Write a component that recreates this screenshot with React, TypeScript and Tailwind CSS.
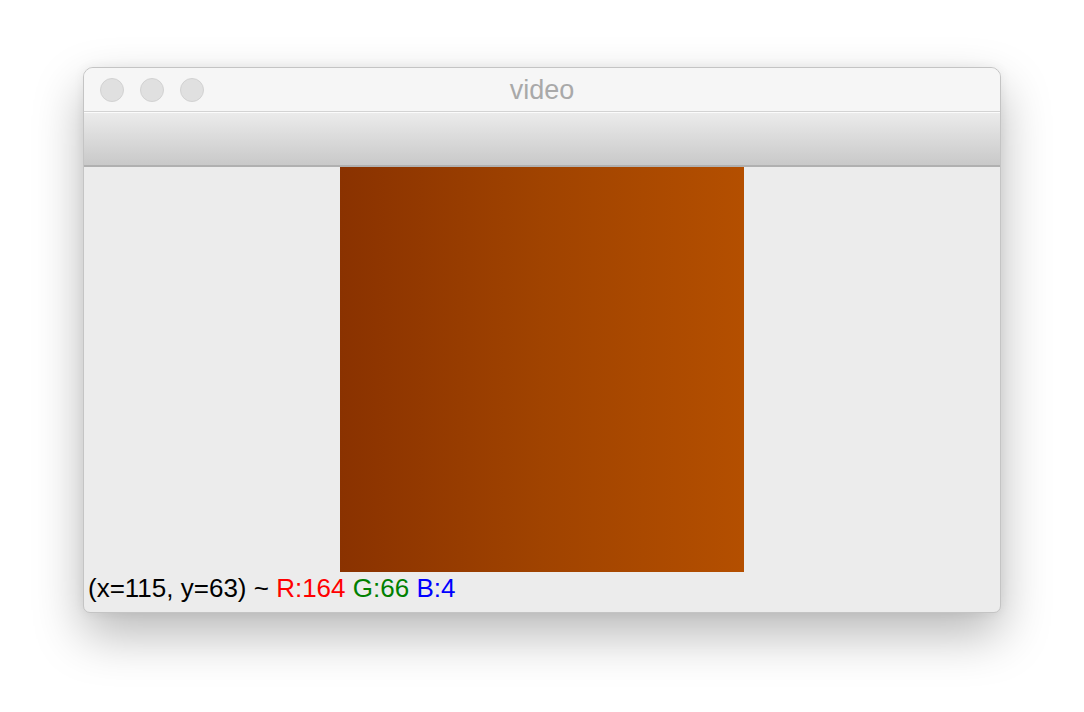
import React from "react";

export default function App() {
  return (
    <div className="w-[1084px] h-[712px] bg-white overflow-hidden pt-[67px] pl-[83px]" style={{ fontFamily: '"Liberation Sans", Arial, sans-serif' }}>
      <div className="w-[918px] h-[546px] flex flex-col rounded-t-[10px] rounded-b-[7px] border border-[#c4c4c4] bg-[#ececec] overflow-hidden shadow-[0_22px_50px_rgba(0,0,0,0.28),0_0_12px_rgba(0,0,0,0.06)]">
        <div className="relative h-[44px] shrink-0 bg-[#f6f6f6] border-b border-[#d3d3d3] flex items-center pl-[16px] gap-[16px]">
          <div className="w-[24px] h-[24px] rounded-full bg-[#e0e0e0] border border-[#d2d2d2]" />
          <div className="w-[24px] h-[24px] rounded-full bg-[#e0e0e0] border border-[#d2d2d2]" />
          <div className="w-[24px] h-[24px] rounded-full bg-[#e0e0e0] border border-[#d2d2d2]" />
          <div className="absolute inset-0 flex items-center justify-center pt-[2px] text-[27px] text-[#a9a9a9] pointer-events-none">
            video
          </div>
        </div>
        <div className="h-[55px] shrink-0 flex flex-col">
          <div className="h-[1px] bg-[#fbfbfb]" />
          <div className="flex-1 bg-gradient-to-b from-[#ebebeb] to-[#c9c9c9]" />
          <div className="h-[2px] bg-[#b0b0b0]" />
        </div>
        <div className="flex-1 flex flex-col">
          <div className="flex justify-center">
            <div className="w-[404px] h-[405px] bg-gradient-to-r from-[#8a3200] via-[#a04300] to-[#b44f00]" />
          </div>
          <div className="pl-[4px] pt-[1px] text-[26px] leading-[30px] text-black whitespace-nowrap">
            <span>(x=115, y=63) ~ </span>
            <span className="text-[#ff0000]">R:164</span>{" "}
            <span className="text-[#008000]">G:66</span>{" "}
            <span className="text-[#0000ff]">B:4</span>
          </div>
        </div>
      </div>
    </div>
  );
}
